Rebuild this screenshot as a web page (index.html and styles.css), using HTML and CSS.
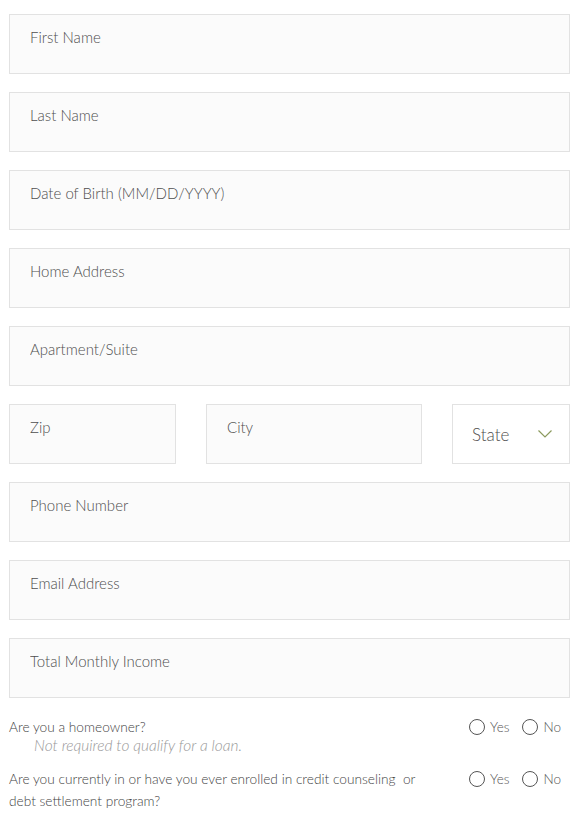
FILE: index.html
```html
<!DOCTYPE html>
<html lang="en">
<head>
  <meta charset="UTF-8" />
  <meta name="viewport" content="width=device-width, initial-scale=1.0"/>
  <title>Application</title>
  <link rel="stylesheet" href="styles.css">
</head>
<body>
  <form class="form">
    <input class="field" type="text" placeholder="First Name">
    <input class="field" type="text" placeholder="Last Name">
    <input class="field" type="text" placeholder="Date of Birth (MM/DD/YYYY)">
    <input class="field" type="text" placeholder="Home Address">
    <input class="field" type="text" placeholder="Apartment/Suite">

    <div class="row">
      <input class="field" type="text" placeholder="Zip">
      <input class="field" type="text" placeholder="City">
      <div class="select-wrap">
        <select class="select">
          <option>State</option>
        </select>
        <svg class="chevron" width="14" height="8" viewBox="0 0 14 8">
          <polyline points="0.5,0.5 7,7 13.5,0.5" fill="none" stroke="#8c9a5e" stroke-width="1.2"/>
        </svg>
      </div>
    </div>

    <input class="field" type="tel" placeholder="Phone Number">
    <input class="field" type="email" placeholder="Email Address">
    <input class="field" type="text" placeholder="Total Monthly Income">

    <div class="question first">
      <div class="question-text">
        Are you a homeowner?
        <span class="note">Not required to qualify for a loan.</span>
      </div>
      <div class="radios">
        <label class="radio"><input type="radio" name="owner"><span class="dot"></span>Yes</label>
        <label class="radio"><input type="radio" name="owner"><span class="dot"></span>No</label>
      </div>
    </div>

    <div class="question">
      <div class="question-text wide">
        Are you currently in or have you ever enrolled in credit counseling &nbsp;or debt settlement program?
      </div>
      <div class="radios">
        <label class="radio"><input type="radio" name="debt"><span class="dot"></span>Yes</label>
        <label class="radio"><input type="radio" name="debt"><span class="dot"></span>No</label>
      </div>
    </div>
  </form>
</body>
</html>
```

FILE: styles.css
```css
body {
  margin: 0;
  background-color: #fff;
  font-family: Lato, "Open Sans", sans-serif;
  font-weight: 300;
  color: #555;
}

.form {
  display: flex;
  flex-direction: column;
  gap: 18px;
  padding: 14px 11px 0 9px;
}

.field {
  box-sizing: border-box;
  width: 100%;
  height: 60px;
  padding: 0 20px 15px 20px;
  border: 1px solid #e2e2e2;
  border-radius: 0;
  background-color: #fbfbfb;
  font-family: inherit;
  font-weight: 300;
  font-size: 15px;
  color: #555;
  outline: none;
}

.field::placeholder {
  color: #4e4e4e;
}

.row {
  display: grid;
  grid-template-columns: 167px 216px 1fr;
  column-gap: 30px;
}

.select-wrap {
  position: relative;
}

.select {
  box-sizing: border-box;
  width: 100%;
  height: 60px;
  padding: 0 19px;
  border: 1px solid #e2e2e2;
  border-radius: 0;
  background-color: #fff;
  font-family: inherit;
  font-weight: 300;
  font-size: 17px;
  color: #4e4e4e;
  appearance: none;
  -webkit-appearance: none;
  outline: none;
}

.chevron {
  position: absolute;
  top: 26px;
  right: 18px;
  pointer-events: none;
}

.question {
  display: flex;
  justify-content: space-between;
  align-items: flex-start;
  font-size: 13.7px;
  line-height: 22px;
  color: #444;
}

.question.first {
  margin-top: 2px;
  line-height: 18px;
  margin-bottom: -4px;
}

.question-text.wide {
  width: 420px;
}

.note {
  display: block;
  padding-left: 25px;
  font-size: 15.5px;
  font-style: italic;
  color: #999;
}

.radios {
  display: flex;
  gap: 13px;
  margin-right: 9px;
}

.radio {
  display: flex;
  align-items: center;
  gap: 5px;
  font-size: 13.5px;
  color: #555;
  cursor: pointer;
}

.radio input {
  display: none;
}

.dot {
  width: 14px;
  height: 14px;
  border: 1px solid #555;
  border-radius: 50%;
}
```
